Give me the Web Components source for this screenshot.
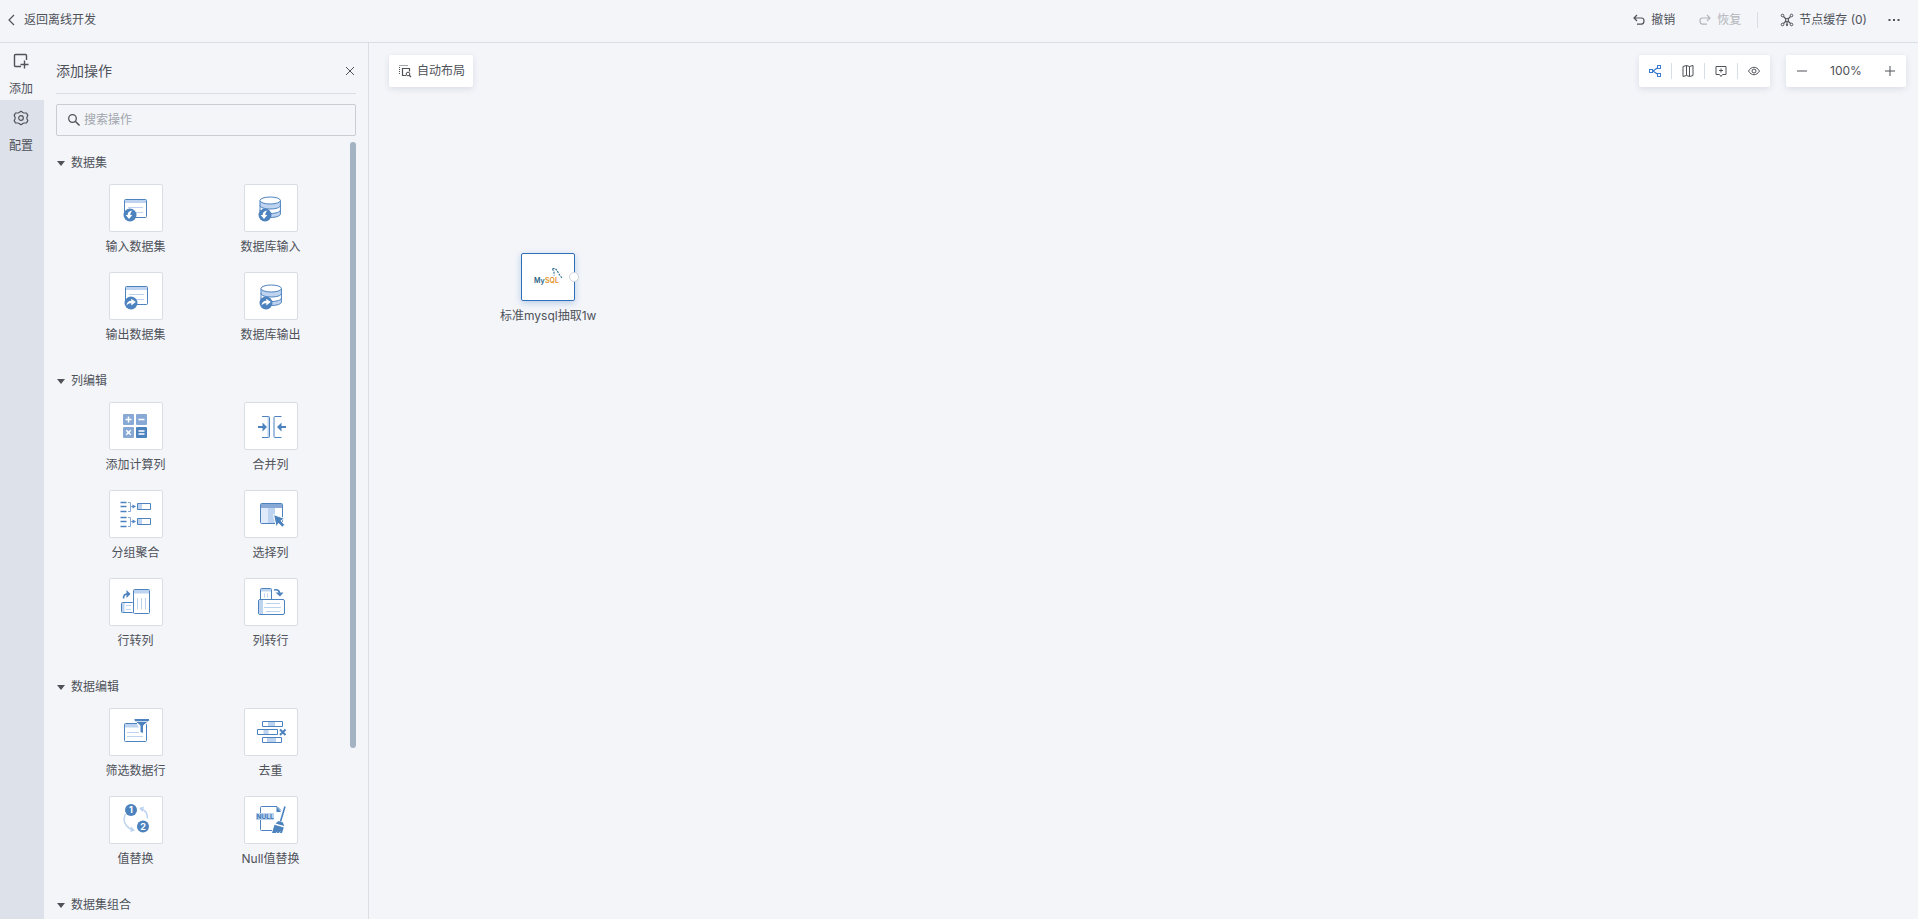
<!DOCTYPE html>
<html lang="zh-CN">
<head>
<meta charset="utf-8">
<title>离线开发</title>
<style>
  html, body { height: 100%; margin: 0; }
  body {
    --bg: #f3f5f9;
    --line: #d9dde4;
    --text: #4f5259;
    --blue: #4c82be;
    --mid: #88a9d6;
    --light: #bdd3f0;
    --pale: #dfeafa;
    background: var(--bg);
    color: var(--text);
    font: 12px/20px Inter, "Noto Sans CJK SC", sans-serif;
    overflow: hidden;
  }
</style>
</head>
<body>
<flow-app></flow-app>

<script>
// shared reset for the buttons in every shadow root
const base = `
  *, *::before { box-sizing: border-box; }
  button {
    margin: 0; padding: 0; border: 0; background: none;
    font: inherit; color: inherit; cursor: pointer;
  }
`;

const define = (name, html) => {
  const template = document.createElement('template');
  template.innerHTML = html;
  window.customElements.define(name, class extends HTMLElement {
    constructor() {
      super();
      this.attachShadow({ mode: 'open' });
      this.shadowRoot.appendChild(template.content.cloneNode(true));
    }
  });
};

const database = `
  <path fill="#fff" stroke="none" d="M16 16.500v13.500c0 2 4.500 3.500 10.200 3.500s10.200-1.500 10.200-3.500V16.500"/>
  <path fill="var(--light)" stroke="none" d="M16 16.500v5c0 2 4.500 3.500 10.200 3.500s10.200-1.500 10.200-3.500v-5c0 2-4.500 3.500-10.200 3.500S16 18.500 16 16.500zM16 26v4c0 2 4.500 3.500 10.200 3.500s10.200-1.500 10.200-3.500v-4c0 2-4.500 3.500-10.200 3.500S16 28 16 26z"/>
  <path d="M16 21.500c0 2 4.500 3.500 10.200 3.500s10.200-1.500 10.200-3.500M16 26c0 2 4.500 3.500 10.200 3.500s10.200-1.500 10.200-3.500M16 16.500V30c0 2 4.500 3.500 10.200 3.500s10.200-1.500 10.200-3.500V16.500"/>
  <ellipse cx="26.200" cy="16.500" rx="10.200" ry="3.500" fill="#fff"/>
`;
const sheet = `
  <rect x="15.500" y="15.500" width="22" height="18" rx="1" fill="#fff"/>
  <path stroke="none" fill="var(--light)" d="M16 16h21v3H16z"/>
  <path stroke="var(--light)" d="M19 23.500h15M19 28.500h15"/>
`;
const badgeIn = `
  <circle cx="21" cy="31" r="6.500" stroke="none" fill="var(--blue)"/>
  <path stroke="none" fill="#fff" d="M23.500 26.500c-3.500.3-4.800 2-4.800 4.500h-2l3.300 4 3.300-4h-2c0-1.800.6-3 2.200-4.500z"/>
`;
const badgeOut = `
  <circle cx="22" cy="31" r="6.500" stroke="none" fill="var(--blue)"/>
  <path stroke="none" fill="#fff" d="M17.500 33.500c.2-3 2-4.700 4.800-4.700v-2l4.500 3.300-4.500 3.400v-2.200c-2 0-3.500.6-4.800 2.200z"/>
`;

// card pictures are drawn on the 52x46 inside of a card, tool icons on 16x16
const cardIcons = {
  inputSheet: sheet + badgeIn,
  inputDb: database + badgeIn,
  outputSheet: `<g transform="translate(1 -1)">${sheet}</g>${badgeOut}`,
  outputDb: `<g transform="translate(1 0)">${database}</g>${badgeOut}`,
  calc: `
    <g stroke="none" fill="var(--mid)">
      <rect x="14" y="12" width="11" height="11" rx="1"/>
      <rect x="27" y="12" width="11" height="11" rx="1"/>
      <rect x="14" y="25" width="11" height="11" rx="1"/>
      <rect x="27" y="25" width="11" height="11" rx="1" fill="var(--blue)"/>
    </g>
    <path stroke="#fff" stroke-width="1.500" d="M16.500 17.500h6M19.500 14.500v6M29.500 17.500h6M17.300 28.300l4.400 4.400M21.700 28.300l-4.400 4.400M29.500 29h6M29.500 32h6"/>`,
  merge: `
    <path stroke="none" fill="var(--light)" d="M23.500 15h2v20h-2z"/>
    <path d="M18 14.500h6.500q1 0 1 1v19q0 1-1 1H18M37.500 14.500H31q-1 0-1 1v19q0 1 1 1h6.500"/>
    <path stroke-width="2" d="M14 25h5M42 25h-5"/>
    <path stroke="none" fill="var(--blue)" d="M18.500 20.500L23 25l-4.500 4.500zM37.500 20.500L33 25l4.500 4.500z"/>`,
  group: `
    <path stroke-width="1.500" d="M11.500 12.500H17.500M11.500 16.500H17.500M11.500 21.500H17.500M11.500 27.500H17.500M11.500 31.500H17.500M11.500 36.500H17.500"/>
    <path stroke="var(--mid)" d="M19 12.500h2.500v9H19M19 27.500h2.500v9H19M21.500 16.500H24M21.500 31.500H24"/>
    <path stroke="none" fill="var(--blue)" d="M23.500 14.500l3.500 2-3.500 2zM23.500 29.500l3.500 2-3.500 2z"/>
    <path stroke="none" fill="var(--light)" d="M28 14h5v5h-5zM28 29h5v5h-5z"/>
    <path d="M28.500 13.500h13v6h-13zM28.500 28.500h13v6h-13z"/>`,
  select: `
    <rect x="16.500" y="13.500" width="22" height="20" rx="1" fill="#fff"/>
    <path stroke="none" fill="var(--pale)" d="M17 18h7v15h-7z"/>
    <path stroke="none" fill="var(--light)" d="M24 18h7v15h-7z"/>
    <path stroke="none" fill="var(--mid)" d="M17 14h21v4H17z"/>
    <path stroke="#fff" fill="var(--blue)" d="M29.500 24.500l11 4-3.500 2.300 3.700 4-2.400 2.400-3.800-3.900-2.200 3.900z"/>`,
  rowToCol: `
    <rect x="12.500" y="24.500" width="12" height="10" rx="1" fill="#fff"/>
    <path stroke="none" fill="var(--light)" d="M13 25h2.500v9H13z"/>
    <path stroke="var(--light)" d="M17 27.500h5M17 31.500h5"/>
    <rect x="24.500" y="11.500" width="16" height="24" rx="1" fill="#fff"/>
    <path stroke="none" fill="var(--light)" d="M25 12h15v3.500H25z"/>
    <path stroke="var(--light)" d="M28.500 20v11.500M32.500 20v11.500M36.500 20v11.500"/>
    <path stroke-width="1.600" d="M14.500 20.500c0-3 1-4.500 4-4.500"/>
    <path stroke="none" fill="var(--blue)" d="M17.500 12l4 4-4 4z"/>`,
  colToRow: `
    <rect x="16.500" y="10.500" width="11" height="13" rx="1" fill="#fff"/>
    <path stroke="none" fill="var(--light)" d="M17 11h10v2.500H17z"/>
    <path stroke="var(--light)" d="M20.500 15.500v4M23.500 15.500v4"/>
    <rect x="14.500" y="21.500" width="26" height="15" rx="1.500" fill="#fff"/>
    <path stroke="none" fill="var(--light)" d="M15 22h4v14h-4z"/>
    <path stroke="var(--light)" d="M22 25.500h14M20 29.500h17M22 33.500h14"/>
    <path stroke-width="1.600" d="M30 12c3.500-1 5.500.5 5.500 3.500"/>
    <path stroke="none" fill="var(--blue)" d="M31.500 14.500h8l-3.500 4z"/>`,
  filter: `
    <rect x="15.500" y="15.500" width="22" height="18" rx="1" fill="#fff"/>
    <path stroke="none" fill="var(--light)" d="M16 16h12l2 3.500H16z"/>
    <path stroke="var(--light)" d="M18 24.500h12M18 28.500h16"/>
    <path stroke="#fff" fill="var(--blue)" d="M25 10.500h15.500v2l-6 5v8l-3.500-1v-7l-6-5z"/>
    <path stroke="#fff" stroke-width=".7" d="M27 13.500h11.500"/>`,
  dedupe: `
    <path stroke="none" fill="var(--light)" d="M24 13.500h7v5h-7zM19.500 21.500h5v5h-5zM23 29.500h9v5h-9z"/>
    <path d="M18.500 13.500h20v5h-20zM13.500 21.500h20v5h-20zM18.500 29.500h19v5h-19z"/>
    <path stroke-width="2" d="M36 21.500l5.500 5.500M41.500 21.500L36 27"/>`,
  replace: `
    <path stroke="var(--light)" stroke-width="1.400" d="M16.500 18c-3 6-1 13 7.500 16M32.500 13c4.500 1.500 6 5 6 9.500"/>
    <path stroke="none" fill="var(--light)" d="M22 30.500l4 4-4.500 1.500zM35 10.500l-5 1.500 3.500 4z"/>
    <circle cx="22" cy="14" r="6" stroke="none" fill="var(--blue)"/>
    <circle cx="34" cy="30.500" r="6" stroke="none" fill="var(--blue)"/>
    <g stroke="none" fill="#fff" font-size="9" font-weight="700" text-anchor="middle">
      <text x="22" y="17">1</text><text x="34" y="33.500">2</text>
    </g>`,
  nullValue: `
    <path d="M16.500 17v-5.500q0-1 1-1H33l4 4M16.500 24v9.500q0 1 1 1H28"/>
    <path stroke="none" fill="var(--blue)" d="M32.500 10.500l4.500 5.500h-4.500z"/>
    <path stroke="none" fill="var(--light)" d="M12 17h18v7H12z"/>
    <text x="12.500" y="23" stroke="none" fill="var(--blue)" font-size="6.500" font-weight="800">NULL</text>
    <path stroke-width="1.600" d="M41 10.500l-4.500 15"/>
    <path stroke="none" fill="var(--blue)" d="M34.500 25l4.500 1.500 1.200 3.500-8.700-2.500zM30.500 28.800l9.300 2.700-1.800 5.500h-2l.5-2.200-1.500 2.200h-2l.4-1.800-1.400 1.800h-4z"/>`,
  mysql: `
    <g stroke="none" font-size="7" font-weight="600">
      <text x="13" y="29.500" fill="#1f5f83">My</text><text x="24" y="29.500" fill="#e59326">SQL</text>
    </g>
    <path stroke="#2b6d88" stroke-width="1.100" stroke-dasharray="2 1" d="M31.500 15.500c3-.5 5 2 6 5l3.500 4.500M31.500 16l1.500 3v3.500"/>`,
};

const toolIcons = {
  back: '<path stroke-width="1.200" d="M10 3L5 8l5 5"/>',
  add: '<path stroke-width="1.400" d="M8 13.500H2.500q-1 0-1-1v-10q0-1 1-1h10q1 0 1 1V7M11.500 7.500v8M7.500 11.500h8"/>',
  gear: '<path stroke-linejoin="round" stroke-width="1.200" d="M8 1.300l2.300 1.500q.4.200.9.200h2.300l1.300 2.400-.8 1.700q-.3.900 0 1.800l.8 1.700-1.300 2.400h-2.300q-.5 0-.9.200L8 14.700l-2.300-1.500q-.4-.2-.9-.2H2.500L1.200 10.600l.8-1.700q.3-.9 0-1.800l-.8-1.700L2.500 3h2.300q.5 0 .9-.2z"/><circle cx="8" cy="8" r="2.300" stroke-width="1.200"/>',
  close: '<path d="M4 4l8 8M12 4l-8 8"/>',
  search: '<circle cx="6.500" cy="6.500" r="3.800" stroke-width="1.300"/><path stroke-width="1.600" d="M9.500 9.500l4 4"/>',
  caret: '<path stroke="none" fill="currentColor" d="M4 6h8L8 11z"/>',
  undo: '<path stroke-width="1.200" d="M6 3L3 6l3 3M3 6h7.500q2.500 0 2.500 3t-2.500 3.200H6"/>',
  redo: '<path stroke-width="1.200" d="M10 3l3 3-3 3M13 6H5.500Q3 6 3 9t2.500 3.200H10"/>',
  nodes: '<circle cx="3.500" cy="3.500" r="1.300"/><circle cx="12.500" cy="3.500" r="1.300"/><circle cx="3.500" cy="12.500" r="1.300"/><circle cx="12.500" cy="12.500" r="1.300"/><path stroke-width="1.200" d="M4.500 4.500L7 7M11.500 4.500L9 7M4.500 11.500L7 9M11.500 11.500L9 9M8 10v3"/><circle cx="8" cy="8" r="1.500"/><circle cx="8" cy="13" r=".7"/>',
  more: '<path stroke="none" fill="currentColor" d="M2.500 7h2v2h-2zM7 7h2v2H7zM11.500 7h2v2h-2z"/>',
  layout: '<path stroke-dasharray="1 1" d="M2.500 11V3M2.500 2.500H11"/><path stroke-width="1.200" d="M12.500 8.500v-3h-7v7H9"/><circle cx="11" cy="11" r="1.800"/><path stroke-width="1.200" d="M12 12l2 2"/>',
  share: '<path stroke-width="1.300" d="M6 8l5-3.500M6 8l5 3.500"/><rect x="2.500" y="6.500" width="3" height="3"/><rect x="10.500" y="2.500" width="3" height="3"/><rect x="10.500" y="10.500" width="3" height="3"/>',
  map: '<path d="M3 3.500L6.500 2.500l3 1 3.500-1v10l-3.500 1-3-1L3 13.500zM6.500 2.500v10M9.500 3.500v10"/>',
  comment: '<path d="M3 3.500h10v8H9.500L8 13.500 6.500 11.500H3zM6 7.500h4M8 5.500v4"/>',
  eye: '<path d="M2.500 8C5.500 3 10.500 3 13.500 8 10.500 13 5.500 13 2.500 8z"/><circle cx="8" cy="8" r="2"/>',
  minus: '<path d="M3 8h10"/>',
  plus: '<path d="M3 8h10M8 3v10"/>',
};

class FlowIcon extends HTMLElement {
  constructor() {
    super();
    this.attachShadow({ mode: 'open' });
  }

  connectedCallback() {
    const name = this.getAttribute('name');
    const isCard = name in cardIcons;
    const size = isCard ? 'width="52" height="46" viewBox="1 1 52 46"' : 'width="16" height="16" viewBox="0 0 16 16"';
    this.shadowRoot.innerHTML = `
      <style>
        :host { display: block; flex: none; }
        svg { display: block; fill: none; stroke: ${isCard ? 'var(--blue)' : 'currentColor'}; }
        text { font-family: Inter, sans-serif; }
      </style>
      <svg ${size} aria-hidden="true">${isCard ? cardIcons[name] : toolIcons[name]}</svg>
    `;
  }
}
window.customElements.define('flow-icon', FlowIcon);

define('tool-button', `
  <style>
    ${base}
    :host { display: block; }
    button { display: flex; align-items: center; gap: 4px; height: 20px; white-space: nowrap; }
  </style>
  <button type="button"><slot name="icon"></slot><slot></slot></button>
`);

define('app-header', `
  <style>
    ${base}
    :host {
      display: flex; align-items: center; justify-content: space-between;
      height: 43px; padding: 0 16px 2px 4px;
      border-bottom: 1px solid var(--line);
    }
    nav { display: flex; align-items: center; }
    .redo { color: #b3b6bc; margin: 0 16px 0 22px; }
    .cache { margin-left: 21px; }
    .more { margin-left: 19px; }
    i { width: 1px; height: 16px; background: var(--line); }
  </style>
  <tool-button><flow-icon slot="icon" name="back"></flow-icon>返回离线开发</tool-button>
  <nav>
    <tool-button><flow-icon slot="icon" name="undo"></flow-icon>撤销</tool-button>
    <tool-button class="redo"><flow-icon slot="icon" name="redo"></flow-icon>恢复</tool-button>
    <i></i>
    <tool-button class="cache"><flow-icon slot="icon" name="nodes"></flow-icon>节点缓存 (0)</tool-button>
    <tool-button class="more"><flow-icon slot="icon" name="more"></flow-icon></tool-button>
  </nav>
`);

define('side-rail', `
  <style>
    ${base}
    :host { display: flex; flex-direction: column; width: 44px; background: #dde1e9; }
    button {
      display: flex; flex-direction: column; align-items: center; gap: 10px;
      padding: 10px 2px 1px 0; height: 57px;
    }
    button.active { background: var(--bg); }
  </style>
  <button type="button" class="active"><flow-icon name="add"></flow-icon>添加</button>
  <button type="button"><flow-icon name="gear"></flow-icon>配置</button>
`);

define('op-card', `
  <style>
    ${base}
    :host { display: block; height: 88px; }
    button { display: flex; flex-direction: column; align-items: center; gap: 5px; width: 100%; }
    span {
      width: 54px; height: 48px;
      background: #fff; border: 1px solid var(--line); border-radius: 2px;
    }
  </style>
  <button type="button"><span><slot name="icon"></slot></span><slot></slot></button>
`);

define('op-group', `
  <style>
    ${base}
    :host { display: block; }
    button { display: flex; align-items: center; gap: 2px; height: 42px; margin-left: -3px; }
    div { display: grid; grid-template-columns: 1fr 1fr; padding: 0 12px; }
  </style>
  <button type="button" aria-expanded="true"><flow-icon name="caret"></flow-icon><slot name="title"></slot></button>
  <div><slot></slot></div>
`);

const groups = [
  ['数据集', [['inputSheet', '输入数据集'], ['inputDb', '数据库输入'], ['outputSheet', '输出数据集'], ['outputDb', '数据库输出']]],
  ['列编辑', [['calc', '添加计算列'], ['merge', '合并列'], ['group', '分组聚合'], ['select', '选择列'], ['rowToCol', '行转列'], ['colToRow', '列转行']]],
  ['数据编辑', [['filter', '筛选数据行'], ['dedupe', '去重'], ['replace', '值替换'], ['nullValue', 'Null值替换']]],
  ['数据集组合', []],
];

const card = ([icon, label]) => `<op-card><flow-icon slot="icon" name="${icon}"></flow-icon>${label}</op-card>`;

define('op-panel', `
  <style>
    ${base}
    :host {
      display: flex; flex-direction: column; width: 325px; min-height: 0;
      padding: 0 12px; border-right: 1px solid var(--line);
    }
    header {
      display: flex; align-items: center; justify-content: space-between;
      flex: none; height: 51px; padding-top: 6px; margin-bottom: 10px;
      border-bottom: 1px solid var(--line);
    }
    h2 { margin: 0; font-size: 14px; font-weight: 400; }
    header button { margin-right: -2px; }
    label {
      display: flex; align-items: center; gap: 2px; flex: none;
      height: 32px; padding: 0 9px; margin-bottom: 6px;
      border: 1px solid #c8ccd3; border-radius: 2px;
    }
    input {
      flex: 1; min-width: 0; border: 0; padding: 0; outline: 0;
      background: none; font: inherit; color: inherit;
    }
    input::placeholder { color: #a1a5ac; opacity: 1; }
    main { display: flex; flex: 1; min-height: 0; overflow: hidden; }
    .list { flex: 1; }
    .thumb { width: 6px; height: 78%; border-radius: 3px; background: #a4b3c3; }
  </style>
  <header>
    <h2>添加操作</h2>
    <button type="button" aria-label="关闭"><flow-icon name="close"></flow-icon></button>
  </header>
  <label><flow-icon name="search"></flow-icon><input type="text" placeholder="搜索操作" aria-label="搜索操作"></label>
  <main>
    <div class="list">
      ${groups.map(([title, items]) => `<op-group><span slot="title">${title}</span>${items.map(card).join('')}</op-group>`).join('')}
    </div>
    <div class="thumb"></div>
  </main>
`);

define('float-bar', `
  <style>
    :host {
      display: flex; align-items: center; height: 32px;
      background: #fff; border-radius: 2px;
      box-shadow: 0 2px 6px rgba(40, 60, 90, .12);
    }
  </style>
  <slot></slot>
`);

define('flow-node', `
  <style>
    ${base}
    :host { display: flex; flex-direction: column; align-items: center; gap: 5px; }
    .box {
      position: relative; width: 54px; height: 48px;
      background: #fff; border: 1px solid #2f70bb; border-radius: 2px;
      box-shadow: 0 2px 6px rgba(47, 112, 187, .3);
    }
    .port {
      position: absolute; right: -5px; top: 18px; width: 10px; height: 10px;
      border: 1px solid #d0d5dd; border-radius: 50%; background: #fff;
    }
  </style>
  <div class="box"><slot name="icon"></slot><div class="port"></div></div>
  <slot></slot>
`);

define('flow-canvas', `
  <style>
    ${base}
    :host { display: block; position: relative; flex: 1; min-width: 0; }
    .bars { display: flex; gap: 16px; padding: 12px 12px 0 20px; }
    .layout { padding: 0 8px; margin-right: auto; }
    .views button { display: flex; align-items: center; justify-content: center; width: 32px; height: 16px; }
    .views button + button { width: 33px; border-left: 1px solid var(--line); }
    .views button.on { color: #3a7bd0; }
    .zoom { width: 120px; padding: 0 8px; justify-content: space-between; }
    flow-node { position: absolute; left: 131px; top: 210px; }
  </style>
  <div class="bars">
    <float-bar class="layout"><tool-button><flow-icon slot="icon" name="layout"></flow-icon>自动布局</tool-button></float-bar>
    <float-bar class="views">
      <button type="button" class="on" aria-label="连线"><flow-icon name="share"></flow-icon></button>
      <button type="button" aria-label="地图"><flow-icon name="map"></flow-icon></button>
      <button type="button" aria-label="备注"><flow-icon name="comment"></flow-icon></button>
      <button type="button" aria-label="预览"><flow-icon name="eye"></flow-icon></button>
    </float-bar>
    <float-bar class="zoom">
      <button type="button" aria-label="缩小"><flow-icon name="minus"></flow-icon></button>
      <span>100%</span>
      <button type="button" aria-label="放大"><flow-icon name="plus"></flow-icon></button>
    </float-bar>
  </div>
  <flow-node><flow-icon slot="icon" name="mysql"></flow-icon>标准mysql抽取1w</flow-node>
`);

define('flow-app', `
  <style>
    :host { display: flex; flex-direction: column; height: 100vh; }
    app-header { flex: none; box-sizing: border-box; }
    div { display: flex; flex: 1; min-height: 0; }
    op-panel { box-sizing: border-box; flex: none; }
    side-rail { flex: none; }
  </style>
  <app-header></app-header>
  <div>
    <side-rail></side-rail>
    <op-panel></op-panel>
    <flow-canvas></flow-canvas>
  </div>
`);
</script>
</body>
</html>
